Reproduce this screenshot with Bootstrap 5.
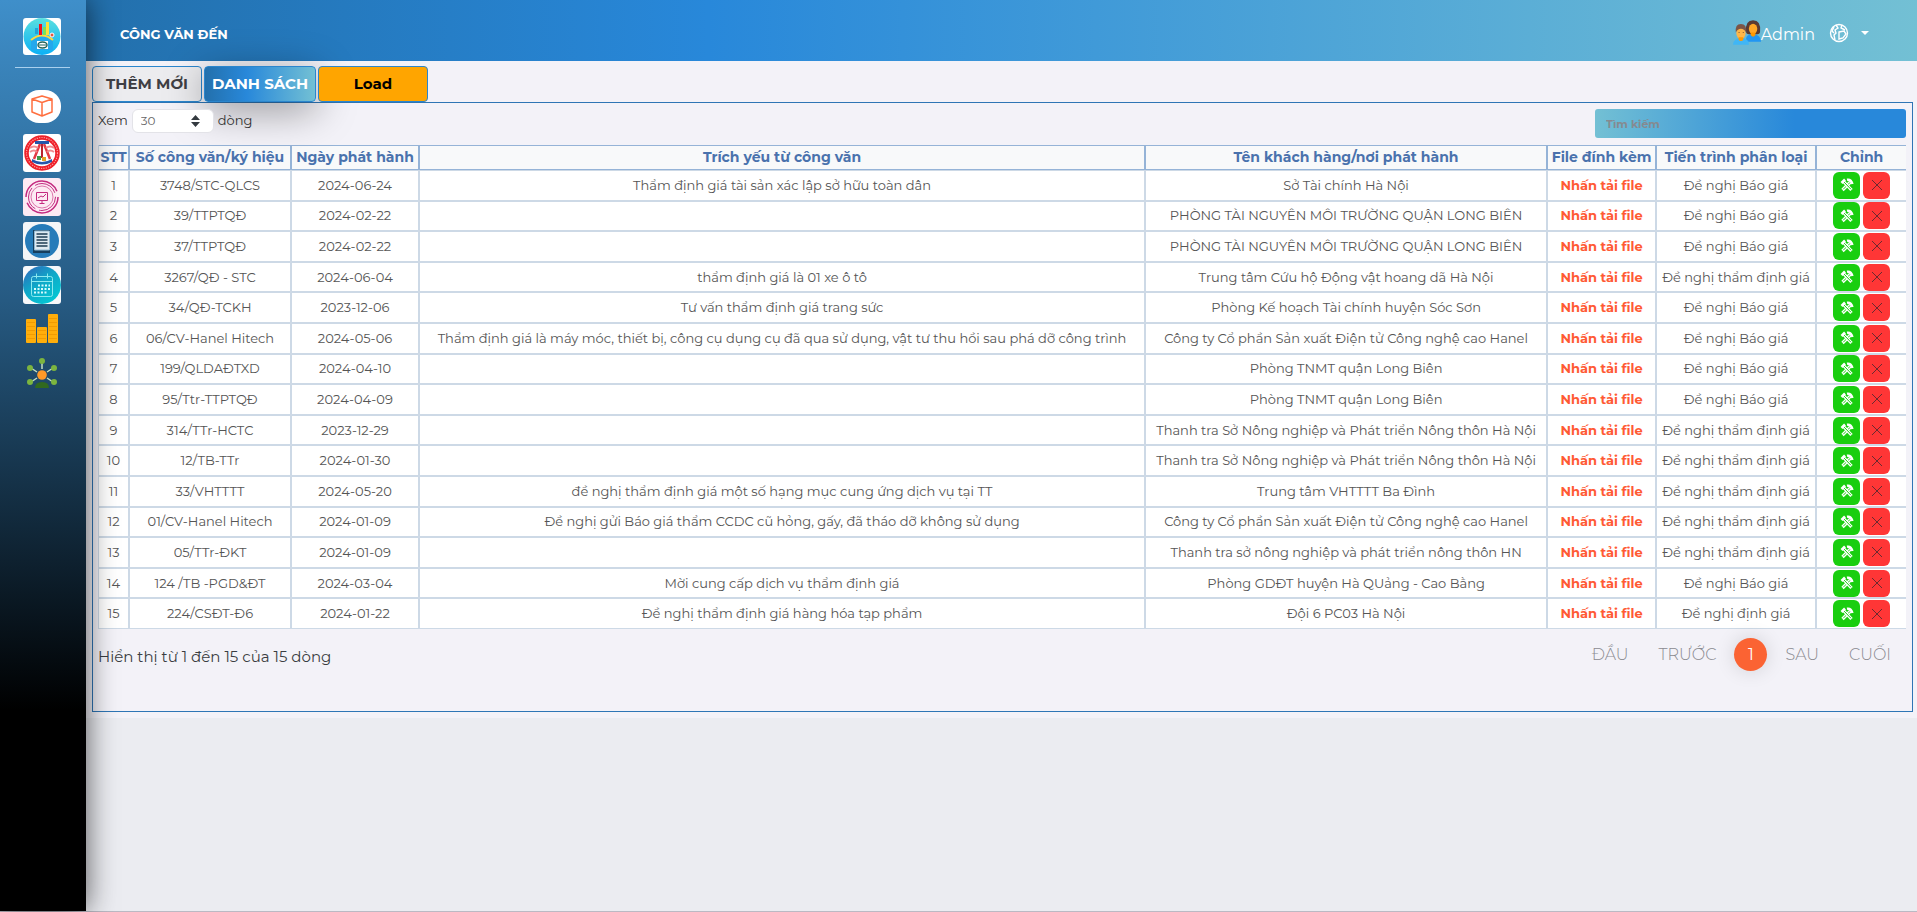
<!DOCTYPE html>
<html lang="vi">
<head>
<meta charset="utf-8">
<meta name="viewport" content="width=device-width, initial-scale=1">
<title>Công văn đến</title>
<link href="https://cdn.jsdelivr.net/npm/bootstrap@5.3.0/dist/css/bootstrap.min.css" rel="stylesheet">
<style>
  body { font-family: Montserrat, Inter, "Noto Sans", sans-serif; font-weight: 400; background: #ebecf1; color: #212529; }
  .shell { border-bottom: 1px solid #bbb9c3; }
  .sidebar { width: 86px; flex: none; background: linear-gradient(180deg, #3f8fca 0%, #265a82 33%, #000 78%); box-shadow: 0 0 30px rgba(0,0,0,.65); z-index: 3; padding: 18px 2px 0 0; }
  .sidebar a { display: block; width: 38px; height: 38px; margin-bottom: 6px; }
  .sidebar svg { display: block; width: 38px; height: 38px; }
  .sidebar hr { width: 55px; margin: 5px 0 22px; border-color: #a9d0ee; opacity: 1; }
  .sidebar .pill { height: 33px; background: #fff; border-radius: 16px; margin-bottom: 11px; }
  .sidebar .pill svg { height: 33px; }
  .topbar { height: 61px; padding: 0 48px 0 34px; background: linear-gradient(90deg, #2370ac 0%, #2888da 34%, #73c0d4 100%); color: #fff; }
  .topbar h1 { font-size: 13px; font-weight: 700; }
  .topbar .user { font-size: 16px; }
  .topbar .btn { color: #fff; padding: 0; border: 0; margin-left: 14px; }
  .sheet { background: #f3f2f8; padding: 5px 4px 6px 6px; }
  .tabs { gap: 2px; }
  .tab-btn { width: 110px; height: 36px; padding: 0; border: 1px solid #2b86cd; border-radius: 4px; font-size: 15px; font-weight: 700; line-height: 34px; text-align: center; white-space: nowrap; color: #3f3f44; background: #ececef; }
  .tab-btn.on { width: 112px; color: #fff; background: linear-gradient(90deg, #2370ac 0%, #2888da 38%, #73c0d4 100%); box-shadow: 0 8px 40px rgba(0,0,0,.4); }
  .tab-btn.load { color: #000; background: #ffa500; }
  .panel { border: 1px solid #2e75b5; min-height: 610px; padding: 6px 6px 0 5px; }
  .tools { font-size: 13px; height: 30px; margin-bottom: 6px; color: #333; }
  .tools .form-select { width: 82px; height: 24px; margin: 0 4px; padding: 0 8px; font-size: 12px; color: #666; border-color: #e3e3e8; background-size: 9px 12px; background-position: right 13px center;
    background-image: url("data:image/svg+xml,%3Csvg xmlns='http://www.w3.org/2000/svg' viewBox='0 0 9 12'%3E%3Cpath fill='%23343a40' d='M4.500 0 9 5H0zM4.500 12 0 7h9z'/%3E%3C/svg%3E"); }
  .tools .search { width: 311px; height: 29px; padding: 0 11px; border: 0; border-radius: 3px; font-size: 11px; font-weight: 700; background: linear-gradient(90deg, #73c0d4 0%, #2888da 64%); }
  .tools .search::placeholder { color: #868a90; opacity: 1; }
  .grid { width: 100%; height: 484px; table-layout: fixed; border-collapse: separate; border-spacing: 0; text-align: center; white-space: nowrap; border-left: 1px solid #cdd9e6; }
  .grid th { padding: 0; border: 1px solid #95b3d7; border-left: 0; border-right-width: 2px; height: 25px; font-size: 14px; font-weight: 700; color: #4a72ad; background: #f8f9fa; }
  .grid td { padding: 0; border: 1px solid #cdd9e6; border-left: 0; border-right-width: 2px; height: 30px; font-size: 13px; line-height: 19px; color: #555; background: #fff; overflow: hidden; }
  .grid th:last-child, .grid td:last-child { border-right: 0; }
  .grid a { color: #ff5a34; font-weight: 700; text-decoration: none; }
  .act { width: 27px; height: 27px; padding: 0; border: 0; border-radius: 6px; display: inline-flex; align-items: center; justify-content: center; }
  .act + .act { margin-left: 3px; }
  .act svg { width: 14px; height: 14px; fill: none; }
  .edit { background: #19ce0f; }
  .del { background: #ff3636; }
  .foot { margin-top: 9px; }
  .foot .info { font-size: 15px; color: #3a3d42; }
  .foot .page-link { border: 0; background: none; color: #8a8a90; font-size: 16px; font-weight: 300; line-height: 33px; padding: 0; }
  .foot .pagination { gap: 31px; padding-right: 15px; }
  .foot .active .page-link { width: 33px; height: 33px; border-radius: 50%; text-align: center; color: #fff; background: #fb6333; font-weight: 400; box-shadow: 0 0 20px rgba(0,0,0,.14); }
  .foot .active { margin: 0 -12px; }
</style>
</head>
<body>
<div class="shell d-flex min-vh-100">
  <nav class="sidebar d-flex flex-column align-items-center" aria-label="Menu">
    <a href="#" aria-label="Trang chủ"><svg viewBox="0 0 38 38">
      <defs><linearGradient id="g1" x2="0" y2="1"><stop stop-color="#59dfdf"/><stop offset="1" stop-color="#0bb0f5"/></linearGradient></defs>
      <rect width="38" height="37" rx="3" fill="#fff"/><circle cx="19" cy="18.500" r="18.500" fill="url(#g1)"/>
      <path d="M8 22q11-8 22 0v10H8z" fill="#24a8ec"/><path d="M8 22q11-9 22 0" fill="none" stroke="#ffd83c" stroke-width="2"/>
      <path fill="#f00f1d" d="M16 6h3v11h-3z"/><path fill="#79e25a" d="M20 9h3v8h-3z"/><path fill="#ffdf3b" d="M23 4h3v13h-3z"/><path fill="#1fa4da" d="M12 10h3v6h-3z"/>
      <path fill="#fff" d="M14 23h11v8H14z"/><ellipse cx="19.500" cy="27" rx="4.500" ry="3" fill="none" stroke="#24655c" stroke-width="1.500"/><path d="M16 27h7" stroke="#24655c"/>
      <circle cx="29" cy="17" r="2" fill="#e5573d" stroke="#fff"/></svg></a>
    <hr>
    <a class="pill" href="#" aria-label="Công văn"><svg viewBox="0 0 38 33" fill="none" stroke="#ff6f3f" stroke-width="1.500" stroke-linejoin="round"><path d="M9 9l10-3 10 3v13l-10 4-10-4zM9 9l10 3.500L29 9M19 12.500V26"/></svg></a>
    <a href="#" aria-label="Thẩm định"><svg viewBox="0 0 38 38"><rect width="38" height="38" rx="3" fill="#fff"/>
      <circle cx="19" cy="19" r="15.500" fill="#fff" stroke="#ee2029" stroke-width="4.500"/><circle cx="19" cy="19" r="15.500" fill="none" stroke="#ff9a9a" stroke-width="1.200" stroke-dasharray="1.200 1.200"/>
      <path d="M17 10l-6 15M21 10l6 15" stroke="#e33a44" stroke-width="2.500"/><path d="M19 10v14" stroke="#b9242e" stroke-width="2"/><path d="M7 14q4-3 8 0M31 14q-4-3-8 0M7 18q4-3 7 0M31 18q-4-3-7 0" stroke="#f08a8e" stroke-width="2" fill="none"/>
      <path d="M12 7h14v3H12z" fill="#2557aa"/><path d="M9 25q10 6 20 0v3q-10 5-20 0z" fill="#2557aa"/><path d="M14 22h4v4h-4z" fill="#3f9c4a"/><path d="M19 23h4v4h-4z" fill="#e3a126"/></svg></a>
    <a href="#" aria-label="Theo dõi"><svg viewBox="0 0 38 38" fill="none" stroke="#c42a80"><rect width="38" height="38" rx="3" fill="#fdeaf3" stroke="none"/>
      <circle cx="19" cy="19" r="16" stroke-width="1.500" stroke-dasharray="44 6"/><circle cx="19" cy="19" r="13.500" stroke-dasharray="24 4"/><circle cx="19" cy="19" r="11" stroke="#dc78ad"/>
      <path d="M13.500 14.500h11v8h-11zM19 22.500v2.500M16.500 25.500h5M15 20l3-2 2 1 3-3"/></svg></a>
    <a href="#" aria-label="Danh mục"><svg viewBox="0 0 38 38"><rect width="38" height="38" rx="3" fill="#f4f5f7"/><circle cx="19" cy="19" r="17" fill="#267bb9"/>
      <path d="M10 8h17v23H10z" fill="#163e5d"/><path d="M11.500 9h15v19h-15z" fill="#dfe9f0" stroke="#8eb7d2"/><path d="M13.500 12h11M13.500 15h11M13.500 18h11M13.500 21h11M13.500 24h11" stroke="#1f3d53" stroke-width="1.500"/></svg></a>
    <a href="#" aria-label="Lịch"><svg viewBox="0 0 38 38"><defs><linearGradient id="g2" x2=".7" y2="1"><stop stop-color="#3063bb"/><stop offset=".5" stop-color="#10a7c8"/><stop offset="1" stop-color="#05c7d3"/></linearGradient></defs>
      <rect width="38" height="38" rx="3" fill="#f7f8fa"/><circle cx="19" cy="19" r="19" fill="url(#g2)"/>
      <g fill="none" stroke="#8deaf0"><rect x="8.500" y="10.500" width="21" height="20" rx="2"/><path d="M8.500 15.500h21M13.500 7.500v5M24.500 7.500v5"/></g>
      <path d="M15 19.500h12M11 23h16M11 26.500h14" stroke="#d7fbfd" stroke-width="1.800" stroke-dasharray="2 1.500"/></svg></a>
    <a href="#" aria-label="Tài chính"><svg viewBox="0 0 38 38"><g fill="#ffae0b"><rect x="3" y="9" width="10" height="24" rx="1"/><rect x="14" y="17" width="10" height="16" rx="1"/><rect x="25" y="4" width="10" height="29" rx="1"/></g>
      <path d="M4 12.500h8M4 16.500h8M4 20.500h8M4 24.500h8M4 28.500h8M15 20.500h8M15 24.500h8M15 28.500h8M26 8.500h8M26 12.500h8M26 16.500h8M26 20.500h8M26 24.500h8M26 28.500h8" stroke="#ee9500" stroke-width=".8"/></svg></a>
    <a href="#" aria-label="Mạng lưới"><svg viewBox="0 0 38 38"><path d="M19 7v8M8 14l6 4M30 14l-6 4M8 28l6-4M30 28l-6-4" stroke="#c6e0c0" stroke-width="1.500"/>
      <g fill="#7cb53f"><circle cx="19" cy="7" r="3"/><circle cx="7" cy="14" r="3"/><circle cx="31" cy="14" r="3"/><circle cx="7" cy="28" r="3"/><circle cx="31" cy="28" r="3"/></g>
      <circle cx="19" cy="21" r="4.800" fill="#ff9a27"/><path d="M12 34q0-6 7-6t7 6z" fill="#31691f"/></svg></a>
  </nav>

  <div class="flex-grow-1">
    <header class="topbar d-flex align-items-center justify-content-between">
      <h1 class="m-0 pt-2">CÔNG VĂN ĐẾN</h1>
      <div class="d-flex align-items-center pt-1">
        <svg width="28" height="25" viewBox="0 0 30 26" aria-hidden="true">
          <path d="M14 20q0-5 7.500-5t8.500 7v1H14z" fill="#2196f3"/><path d="M14 12q-1-12 7.500-12T29 12q0 3-3 3h-9q-3 0-3-3z" fill="#5a3a33"/><ellipse cx="21.500" cy="9" rx="4.500" ry="5.500" fill="#ffa726"/><path d="M19 13h5v3q-2.500 3-5 0z" fill="#ff9800"/>
          <path d="M0 26q1-7 9-7t8 7z" fill="#40b6f5"/><ellipse cx="8.500" cy="13.500" rx="5" ry="6.500" fill="#ffb648"/><path d="M3 13q-1-9 5.500-9T14 13q-2-4-5.500-4T3 13z" fill="#7c5547"/><path d="M6 18h5v3q-2.500 2-5 0z" fill="#ff9800"/><path d="M6 13h1M10.500 13h1" stroke="#714a38"/></svg>
        <span class="user pt-1">Admin</span>
        <button class="btn dropdown-toggle d-flex align-items-center" type="button" aria-label="Ngôn ngữ">
          <svg class="me-2" width="20" height="20" viewBox="0 0 20 20" fill="none" stroke="#fff" stroke-width="1.400"><circle cx="10" cy="10" r="8.500"/><path d="M7 2l2 3-3 2 1 3-2 2 1 5M5 4L3 8l2 2M13 2l-1 3 4 2M10 9l5-1 2 3-3 4-4 1z"/></svg>
        </button>
      </div>
    </header>
    <main class="sheet">
      <div class="tabs d-flex">
        <button class="tab-btn" type="button">THÊM MỚI</button>
        <button class="tab-btn on" type="button">DANH SÁCH</button>
        <button class="tab-btn load" type="button">Load</button>
      </div>
      <section class="panel">
        <div class="tools d-flex justify-content-between align-items-start">
          <label class="d-flex align-items-center">Xem <select class="form-select"><option>30</option></select> dòng</label>
          <input class="search" type="search" placeholder="Tìm kiếm" aria-label="Tìm kiếm">
        </div>
        <table class="grid">
          <colgroup><col style="width:31px"><col style="width:162px"><col style="width:128px"><col><col style="width:402px"><col style="width:109px"><col style="width:160px"><col style="width:89px"></colgroup>
          <thead><tr><th>STT</th><th>Số công văn/ký hiệu</th><th>Ngày phát hành</th><th>Trích yếu từ công văn</th><th>Tên khách hàng/nơi phát hành</th><th>File đính kèm</th><th>Tiến trình phân loại</th><th>Chỉnh</th></tr></thead>
          <tbody id="rows"></tbody>
        </table>
        <div class="foot d-flex justify-content-between">
          <div class="info pt-2">Hiển thị từ 1 đến 15 của 15 dòng</div>
          <ul class="pagination m-0">
            <li class="page-item"><a class="page-link" href="#">ĐẦU</a></li>
            <li class="page-item"><a class="page-link" href="#">TRƯỚC</a></li>
            <li class="page-item active"><a class="page-link" href="#">1</a></li>
            <li class="page-item"><a class="page-link" href="#">SAU</a></li>
            <li class="page-item"><a class="page-link" href="#">CUỐI</a></li>
          </ul>
        </div>
      </section>
    </main>
  </div>
</div>
<script src="https://cdn.jsdelivr.net/npm/bootstrap@5.3.0/dist/js/bootstrap.bundle.min.js"></script>
<script>
  const BG = 'Đề nghị Báo giá', TD = 'Đề nghị thẩm định giá';
  const letters = [
    ['3748/STC-QLCS', '2024-06-24', 'Thẩm định giá tài sản xác lập sở hữu toàn dân', 'Sở Tài chính Hà Nội', BG],
    ['39/TTPTQĐ', '2024-02-22', '', 'PHÒNG TÀI NGUYÊN MÔI TRƯỜNG QUẬN LONG BIÊN', BG],
    ['37/TTPTQĐ', '2024-02-22', '', 'PHÒNG TÀI NGUYÊN MÔI TRƯỜNG QUẬN LONG BIÊN', BG],
    ['3267/QĐ - STC', '2024-06-04', 'thẩm định giá là 01 xe ô tô', 'Trung tâm Cứu hộ Động vật hoang dã Hà Nội', TD],
    ['34/QĐ-TCKH', '2023-12-06', 'Tư vấn thẩm định giá trang sức', 'Phòng Kế hoạch Tài chính huyện Sóc Sơn', BG],
    ['06/CV-Hanel Hitech', '2024-05-06', 'Thẩm định giá là máy móc, thiết bị, công cụ dụng cụ đã qua sử dụng, vật tư thu hồi sau phá dỡ công trình', 'Công ty Cổ phần Sản xuất Điện tử Công nghệ cao Hanel', BG],
    ['199/QLDAĐTXD', '2024-04-10', '', 'Phòng TNMT quận Long Biên', BG],
    ['95/Ttr-TTPTQĐ', '2024-04-09', '', 'Phòng TNMT quận Long Biên', BG],
    ['314/TTr-HCTC', '2023-12-29', '', 'Thanh tra Sở Nông nghiệp và Phát triển Nông thôn Hà Nội', TD],
    ['12/TB-TTr', '2024-01-30', '', 'Thanh tra Sở Nông nghiệp và Phát triển Nông thôn Hà Nội', TD],
    ['33/VHTTTT', '2024-05-20', 'đề nghị thẩm định giá một số hạng mục cung ứng dịch vụ tại TT', 'Trung tâm VHTTTT Ba Đình', TD],
    ['01/CV-Hanel Hitech', '2024-01-09', 'Đề nghị gửi Báo giá thẩm CCDC cũ hỏng, gấy, đã tháo dỡ không sử dụng', 'Công ty Cổ phần Sản xuất Điện tử Công nghệ cao Hanel', TD],
    ['05/TTr-ĐKT', '2024-01-09', '', 'Thanh tra sở nông nghiệp và phát triển nông thôn HN', TD],
    ['124 /TB -PGD&amp;ĐT', '2024-03-04', 'Mời cung cấp dịch vụ thẩm định giá', 'Phòng GDĐT huyện Hà QUảng - Cao Bằng', BG],
    ['224/CSĐT-Đ6', '2024-01-22', 'Đề nghị thẩm định giá hàng hóa tạp phẩm', 'Đội 6 PC03 Hà Nội', 'Đề nghị định giá']
  ];
  const tools = '<svg viewBox="0 0 14 14"><path d="M2.500 12l8-8" stroke="#fff" stroke-width="3.200"/><path d="M3.200 11.300l7-7" stroke="#19ce0f"/><path d="M7 1.800q4-.8 5.500 4.200" stroke="#fff" stroke-width="2.400"/><path d="M3 3l8.500 9" stroke="#fff" stroke-width="3.200"/><path d="M4 4l7 7.300" stroke="#19ce0f"/><path d="M1.500 5L5 1.500" stroke="#fff" stroke-width="2.600"/></svg>';
  const cross = '<svg viewBox="0 0 14 14" stroke="#6b2a30"><path d="M2 2l10 10M12 2L2 12"/></svg>';
  document.getElementById('rows').innerHTML = letters.map((r, i) =>
    `<tr><td>${i + 1}</td><td>${r[0]}</td><td>${r[1]}</td><td>${r[2]}</td><td>${r[3]}</td><td><a href="#">Nhấn tải file</a></td><td>${r[4]}</td>
     <td><div class="d-flex justify-content-center"><button class="act edit" type="button" aria-label="Sửa">${tools}</button><button class="act del" type="button" aria-label="Xóa">${cross}</button></div></td></tr>`).join('');
</script>
</body>
</html>
